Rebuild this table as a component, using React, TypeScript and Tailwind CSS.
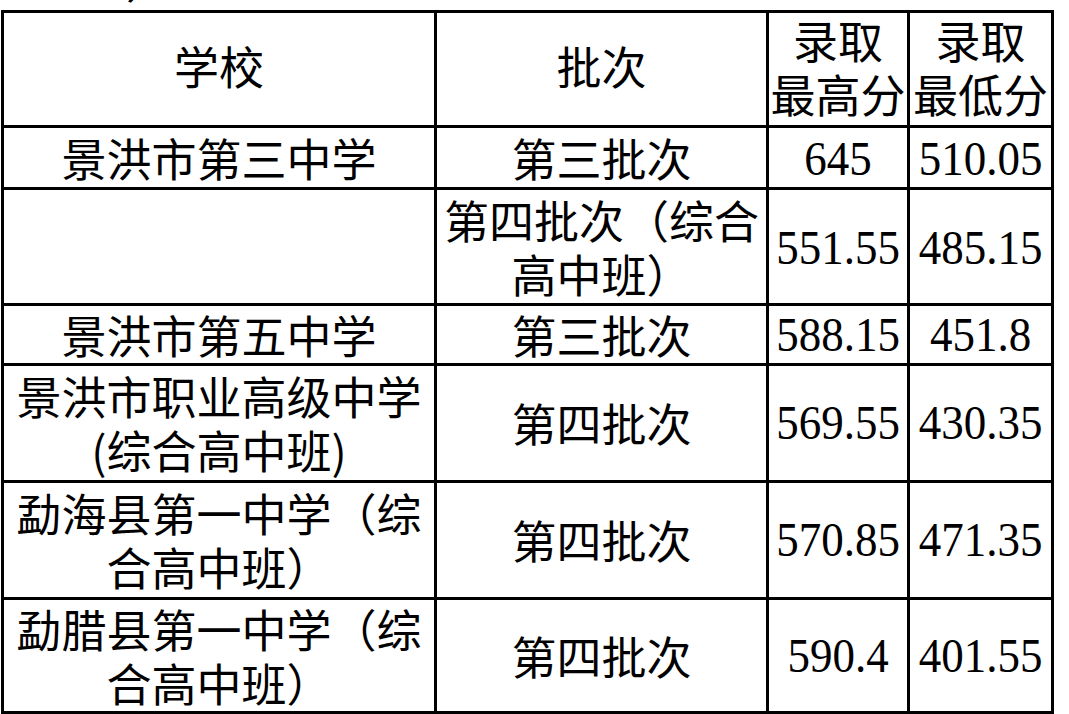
type Row = {
  school: string[];
  batch: string[];
  high: string;
  low: string;
  h: string;
};

const rows: Row[] = [
  { school: ["景洪市第三中学"], batch: ["第三批次"], high: "645", low: "510.05", h: "h-[62px]" },
  { school: [], batch: ["第四批次（综合", "高中班）"], high: "551.55", low: "485.15", h: "h-[116px]" },
  { school: ["景洪市第五中学"], batch: ["第三批次"], high: "588.15", low: "451.8", h: "h-[60px]" },
  { school: ["景洪市职业高级中学", "(综合高中班)"], batch: ["第四批次"], high: "569.55", low: "430.35", h: "h-[117px]" },
  { school: ["勐海县第一中学（综", "合高中班）"], batch: ["第四批次"], high: "570.85", low: "471.35", h: "h-[117px]" },
  { school: ["勐腊县第一中学（综", "合高中班）"], batch: ["第四批次"], high: "590.4", low: "401.55", h: "h-[114px]" },
];

const cjk = "font-['Noto_Sans_CJK_SC','Noto_Sans',sans-serif] text-[45px] leading-[54px]";
const num = "font-['Liberation_Serif','Times_New_Roman',serif] text-[45px] leading-[54px]";
const cell = "border-[3px] border-black text-center align-middle p-0 text-black";

function Lines({ lines }: { lines: string[] }) {
  return (
    <>
      {lines.map((l) => (
        <div key={l} className="whitespace-nowrap">
          {l}
        </div>
      ))}
    </>
  );
}

export default function App() {
  return (
    <div className="w-[1069px] h-[714px] bg-white overflow-hidden">
      {/* cut-off line from the page above the table */}
      <div className="h-[10px] overflow-hidden pl-[126px]">
        <div className={`${cjk} -mt-[47px]`}>）</div>
      </div>
      <table className="ml-[1px] w-[1053px] table-fixed border-collapse">
        <colgroup>
          <col className="w-[433px]" />
          <col className="w-[332px]" />
          <col className="w-[141px]" />
          <col className="w-[144px]" />
        </colgroup>
        <tbody>
          <tr className="h-[114px]">
            <td className={`${cell} ${cjk} pb-[7px]`}>学校</td>
            <td className={`${cell} ${cjk} pb-[7px]`}>批次</td>
            <td className={`${cell} ${cjk} leading-[52px] pb-[4px]`}>
              <div>录取</div>
              <div className="whitespace-nowrap">最高分</div>
            </td>
            <td className={`${cell} ${cjk} leading-[52px] pb-[4px]`}>
              <div>录取</div>
              <div className="whitespace-nowrap">最低分</div>
            </td>
          </tr>
          {rows.map((r, i) => (
            <tr key={i} className={r.h}>
              <td className={`${cell} ${cjk}`}>
                <Lines lines={r.school} />
              </td>
              <td className={`${cell} ${cjk}`}>
                <Lines lines={r.batch} />
              </td>
              <td className={`${cell} ${num}`}>
                <span className="inline-block scale-y-110">{r.high}</span>
              </td>
              <td className={`${cell} ${num}`}>
                <span className="inline-block scale-y-110">{r.low}</span>
              </td>
            </tr>
          ))}
        </tbody>
      </table>
    </div>
  );
}
